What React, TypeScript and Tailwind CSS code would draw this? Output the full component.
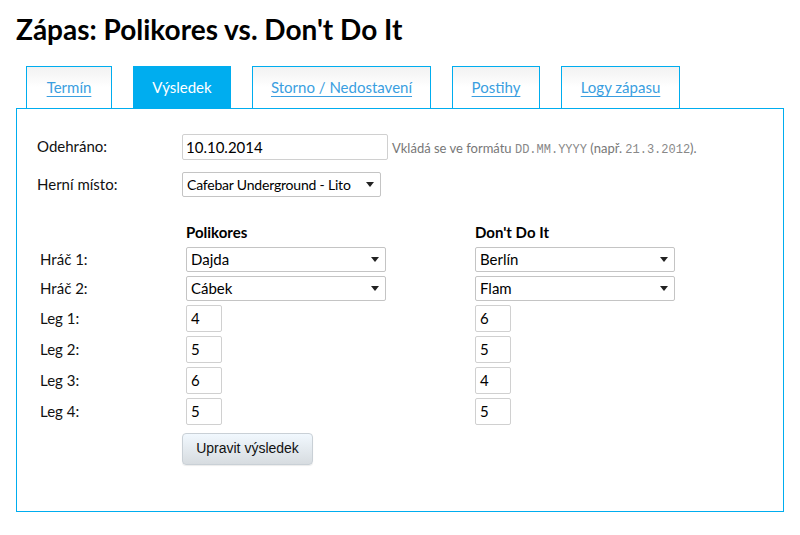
import React from "react";

const tabs = [
  { label: "Termín", w: "w-[86px]" },
  { label: "Výsledek", w: "w-[98px]", active: true },
  { label: "Storno / Nedostavení", w: "w-[179px]" },
  { label: "Postihy", w: "w-[88px]" },
  { label: "Logy zápasu", w: "w-[119px]" },
];

const players = [
  { label: "Hráč 1:", home: "Dajda", away: "Berlín" },
  { label: "Hráč 2:", home: "Cábek", away: "Flam" },
];

const legs = [
  { label: "Leg 1:", home: "4", away: "6" },
  { label: "Leg 2:", home: "5", away: "5" },
  { label: "Leg 3:", home: "6", away: "4" },
  { label: "Leg 4:", home: "5", away: "5" },
];

function Select({ value, w, small }: { value: string; w: string; small?: boolean }) {
  return (
    <div
      className={`flex h-[25px] ${w} items-center justify-between rounded-[2px] border border-[#c4c4c4] bg-white pl-[4px] pr-[6px] ${
        small ? "text-[14px] tracking-[-0.2px]" : "text-[15px]"
      } text-black`}
    >
      <span className="whitespace-nowrap">{value}</span>
      <svg width="8" height="5" viewBox="0 0 8 5" className="ml-[4px] shrink-0">
        <path d="M0 0h8L4 5z" fill="#222" />
      </svg>
    </div>
  );
}

function Box({ value }: { value: string }) {
  return (
    <div className="flex h-[27px] w-[36px] items-center rounded-[2px] border border-[#d0d0d0] bg-white pl-[4px] text-[15px] text-black">
      {value}
    </div>
  );
}

export default function App() {
  return (
    <div className="min-h-[535px] bg-white px-4 pt-[12px] font-['Lato','Open_Sans',sans-serif] text-[15px] text-[#111]">
      <h1 className="text-[28px] font-bold leading-[34px] text-black">
        Zápas: Polikores vs. Don't Do It
      </h1>

      <div className="mt-[20px] flex gap-[21px] pl-[10px]">
        {tabs.map((t) =>
          t.active ? (
            <div
              key={t.label}
              className={`flex h-[42px] ${t.w} items-center justify-center bg-[#00adef] text-white`}
            >
              {t.label}
            </div>
          ) : (
            <a
              key={t.label}
              href="#"
              className={`flex h-[42px] ${t.w} items-center justify-center border border-b-0 border-[#00adef] bg-gradient-to-b from-[#f2f2f2] via-white to-white text-[#3a9ee0] underline underline-offset-[3px]`}
            >
              {t.label}
            </a>
          )
        )}
      </div>

      <div className="h-[404px] w-[768px] border border-[#00adef] pt-[25px]">
        <div className="flex pl-[20px]">
          <div className="w-[145px] pt-[1px] leading-[22px]">Odehráno:</div>
          <div className="flex h-[26px] w-[206px] items-center rounded-[2px] border border-[#d0d0d0] pl-[3px] text-black">
            10.10.2014
          </div>
          <div className="ml-[4px] pt-[5px] text-[13px] text-[#777]">
            Vkládá se ve formátu{" "}
            <span className="font-['Liberation_Mono',monospace] text-[12px] text-[#888]">DD.MM.YYYY</span> (např.{" "}
            <span className="font-['Liberation_Mono',monospace] text-[12px] text-[#888]">21.3.2012</span>).
          </div>
        </div>

        <div className="mt-[12px] flex pl-[20px]">
          <div className="w-[145px] pt-[1px] leading-[22px]">Herní místo:</div>
          <Select value="Cafebar Underground - Lito" w="w-[199px]" small />
        </div>

        <div className="mt-[24px] flex pl-[169px] font-bold text-black">
          <div className="w-[289px]">Polikores</div>
          <div>Don't Do It</div>
        </div>

        <div className="mt-[3px] flex flex-col gap-[4px] pl-[23px]">
          {players.map((p) => (
            <div key={p.label} className="flex items-center">
              <div className="w-[146px]">{p.label}</div>
              <Select value={p.home} w="w-[200px]" />
              <div className="w-[89px]" />
              <Select value={p.away} w="w-[200px]" />
            </div>
          ))}
          {legs.map((l) => (
            <div key={l.label} className="flex items-center">
              <div className="w-[146px]">{l.label}</div>
              <Box value={l.home} />
              <div className="w-[253px]" />
              <Box value={l.away} />
            </div>
          ))}
        </div>

        <div className="mt-[8px] pl-[165px]">
          <button className="h-[32px] w-[131px] rounded-[4px] border border-[#c9d0d6] bg-gradient-to-b from-[#f1f8fe] to-[#d7dce0] font-['Liberation_Sans',Arial,sans-serif] text-[14px] text-[#111] shadow-[0_1px_1px_rgba(0,0,0,0.08)]">
            Upravit výsledek
          </button>
        </div>
      </div>
    </div>
  );
}
